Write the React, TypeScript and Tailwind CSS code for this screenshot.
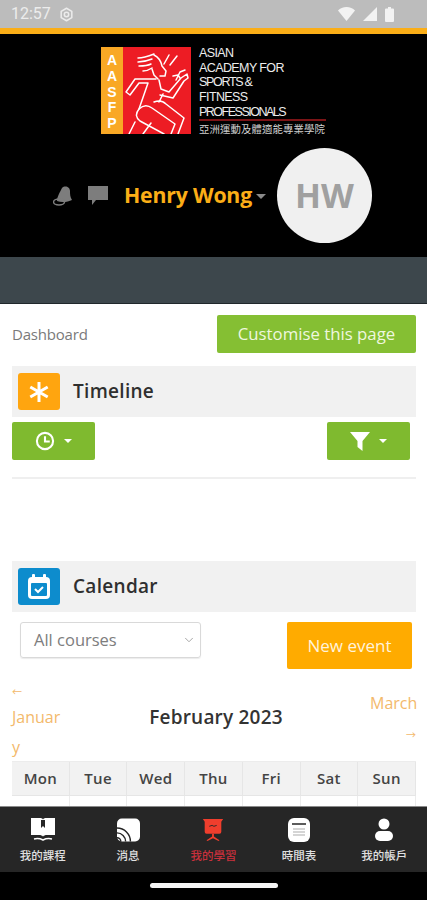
import {ChevronDown} from "lucide-react";

const sans = "font-['Open_Sans','Noto_Sans_CJK_TC',sans-serif]";

const days = ["Mon", "Tue", "Wed", "Thu", "Fri", "Sat", "Sun"];

const StatusBar = () => (
  <div className="h-[28px] shrink-0 bg-[#bcbcbc] flex items-center justify-between pl-[11px] pr-[33px]">
    <div className="flex items-center gap-[8px] text-[#ececec]">
      <span className="font-['Roboto',sans-serif] text-[16px] leading-none">12:57</span>
      <svg width="15" height="15" viewBox="0 0 24 24" fill="none" stroke="currentColor" strokeWidth="2.400">
        <path d="M12 2l8.500 5v10L12 22l-8.500-5V7z" strokeLinejoin="round" />
        <circle cx="12" cy="12" r="3.500" />
      </svg>
    </div>
    <div className="flex items-center gap-[8px] text-[#f2f2f2]">
      <svg width="17" height="14" viewBox="0 0 17 14" fill="currentColor">
        <path d="M0 3.500C2 1.500 5 0 8.500 0S15 1.500 17 3.500L8.500 14z" />
      </svg>
      <svg width="14" height="14" viewBox="0 0 14 14" fill="currentColor">
        <path d="M14 0v14H0z" />
      </svg>
      <svg width="9" height="15" viewBox="0 0 9 15" fill="currentColor">
        <path d="M3 0h3v1.500h2a1 1 0 0 1 1 1V14a1 1 0 0 1-1 1H1a1 1 0 0 1-1-1V2.500a1 1 0 0 1 1-1h2z" />
      </svg>
    </div>
  </div>
);

const Runner = () => (
  <svg width="68" height="87" viewBox="0 0 68 87" fill="none" stroke="#ffffff" strokeWidth="1.500" strokeLinecap="round" strokeLinejoin="round">
    {/* hair */}
    <path d="M15 11c6 0 11-2 16-4M15 15c5 0 9-1 14-3M16 19c4 0 8 0 12-2M20 24c3 0 6-1 9-3" />
    <path d="M41 17l5-9M47 18l7-9" />
    <path d="M31 8c4 2 7 6 8 11l4 5-1 5-5 0M29 22l2 6 4 4" />
    {/* arms */}
    <path d="M33 32H12L3 45l4 3 9-12h9l-9 26" />
    <path d="M36 33l2 9 8 3 12-14 6-4 1 4-4 3-11 17-13-3" />
    <path d="M50 29l5-1 2 3M53 33l4-8 5-2" />
    {/* legs */}
    <path d="M16 62c-4 5-3 9 1 12l24 13M16 62c4-4 9-4 13-1l23 16-4 10" />
    <path d="M31 55c5-2 9-1 12 2l18 14-6 16M36 55l4-8" />
    <path d="M6 87l6-12M20 87l8-11" />
  </svg>
);

const Logo = () => (
  <div className="flex">
    <div className="w-[22px] h-[87px] bg-[#f9a825] flex flex-col items-center justify-between pt-[6px] pb-[4px] text-white text-[14px] leading-none font-bold font-['Liberation_Sans',sans-serif]">
      <span>A</span>
      <span>A</span>
      <span>S</span>
      <span>F</span>
      <span>P</span>
    </div>
    <div className="w-[68px] h-[87px] bg-[#ed1c24]">
      <Runner />
    </div>
    <div className="ml-[8px] w-[127px] -mt-[1px] font-['Liberation_Sans',sans-serif] text-[12.500px] leading-[14.700px] tracking-[-0.600px] text-[#ededed]">
      <div>ASIAN</div>
      <div>ACADEMY FOR</div>
      <div className="tracking-[-1.300px]">SPORTS &amp;</div>
      <div>FITNESS</div>
      <div className="tracking-[-1.500px]">PROFESSIONALS</div>
      <div className="h-[2px] bg-[#7c1416] -mt-[1px]" />
      <div className="font-['Noto_Sans_CJK_TC',sans-serif] text-[10.400px] leading-[15px] tracking-[0.100px] whitespace-nowrap text-[#cfcfcf]">亞洲運動及體適能專業學院</div>
    </div>
  </div>
);

const Header = () => (
  <div className="shrink-0 bg-black border-t-[6px] border-[#fbae17]">
    <div className="h-[223px] flex flex-col items-center pt-[13px]">
      <Logo />
      <div className="mt-[12px] w-full flex items-center pl-[53px]">
        <svg width="20" height="21" viewBox="0 0 20 21" fill="#7d7d7d">
          <path d="M9 3c3-3 8-1 8 3 0 3 0 6 2 9-4 2-10 3-15 1 0-4 3-9 5-13z" />
          <ellipse cx="6" cy="17" rx="5.500" ry="3" fill="none" stroke="#7d7d7d" strokeWidth="1.500" />
        </svg>
        <svg className="ml-[15px]" width="20" height="19" viewBox="0 0 20 19" fill="#7d7d7d">
          <path d="M0 0h20v14H8l-4 5v-5H0z" />
        </svg>
        <span className={`ml-[16px] text-[21.300px] font-bold tracking-[-0.200px] text-[#fbae17] ${sans}`}>Henry Wong</span>
        <span className="ml-[4px] mt-[3px] w-0 h-0 border-x-[5px] border-x-transparent border-t-[5px] border-t-[#8a8a8a]" />
        <div className={`ml-[11px] w-[95px] h-[95px] rounded-full bg-[#f0f0f0] flex items-center justify-center text-[34px] font-bold text-[#a0a0a0] ${sans}`}>HW</div>
      </div>
    </div>
    <div className="h-[47px] bg-[#3d474c] border-b border-[#20272b]" />
  </div>
);

const SectionTitle = ({title, color, icon}: {title: string; color: string; icon: React.ReactNode}) => (
  <div className="h-[51px] bg-[#f1f1f1] flex items-center pl-[6px]">
    <div className={`w-[42px] h-[37px] rounded-[3px] flex items-center justify-center ${color}`}>{icon}</div>
    <span className={`ml-[13px] text-[19px] font-semibold tracking-[0.300px] text-[#2f2f2f] ${sans}`}>{title}</span>
  </div>
);

const GreenButton = ({children}: {children: React.ReactNode}) => (
  <div className="w-[83px] h-[38px] bg-[#7fba2f] rounded-[2px] flex items-center justify-center gap-[9px] text-white">
    {children}
    <span className="w-0 h-0 border-x-[4px] border-x-transparent border-t-[4px] border-t-white" />
  </div>
);

const Content = () => (
  <div className={`flex-1 min-h-0 overflow-hidden bg-white pl-[12px] pr-[11px] pt-[11px] ${sans}`}>
    <div className="flex items-center justify-between">
      <span className="text-[15px] text-[#7a7a7a] tracking-[-0.200px]">Dashboard</span>
      <div className="w-[199px] h-[38px] bg-[#85bf33] rounded-[2px] flex items-center justify-center text-[16.800px] text-[#eef7df]">Customise this page</div>
    </div>
    <div className="mt-[13px]">
      <SectionTitle
        title="Timeline"
        color="bg-[#ffa50f]"
        icon={
          <svg width="20" height="20" viewBox="0 0 20 20" stroke="#ffffff" strokeWidth="3">
            <path d="M10 0v20M1.300 5l17.400 10M18.700 5L1.300 15" />
          </svg>
        }
      />
    </div>
    <div className="mt-[5px] flex justify-between pr-[6px]">
      <GreenButton>
        <svg width="20" height="20" viewBox="0 0 21 21" fill="none" stroke="currentColor" strokeWidth="2.200">
          <circle cx="10.500" cy="10.500" r="8.500" />
          <path d="M10.500 5.500v5.500h5" />
        </svg>
      </GreenButton>
      <GreenButton>
        <svg width="20" height="19" viewBox="0 0 20 19" fill="currentColor">
          <path d="M0 0h20l-7.500 9v10l-5-4V9z" />
        </svg>
      </GreenButton>
    </div>
    <div className="mt-[17px] h-[2px] bg-[#efefef]" />
    <div className="mt-[82px]">
      <SectionTitle
        title="Calendar"
        color="bg-[#0d8ccd]"
        icon={
          <svg width="24" height="27" viewBox="0 0 24 27" fill="none">
            <rect x="1" y="4" width="22" height="22" rx="4" fill="#ffffff" />
            <rect x="5" y="1" width="3" height="6" rx="1" fill="#ffffff" />
            <rect x="16" y="1" width="3" height="6" rx="1" fill="#ffffff" />
            <rect x="4" y="10" width="16" height="13" rx="1" fill="#0d8ccd" />
            <path d="M8 16l3 3 5-5" stroke="#ffffff" strokeWidth="2" />
          </svg>
        }
      />
    </div>
    <div className="mt-[10px] flex items-start pl-[8px] pr-[4px] justify-between">
      <div className="w-[181px] h-[36px] border border-[#d9d9d9] rounded-[3px] flex items-center justify-between pl-[13px] pr-[4px] shadow-[0_1px_1px_#ececec]">
        <span className="text-[16.500px] text-[#7d7d7d]">All courses</span>
        <ChevronDown size={14} strokeWidth={1.500} className="text-[#9a9a9a]" />
      </div>
      <div className="w-[125px] h-[47px] bg-[#ffab00] rounded-[2px] flex items-center justify-center text-[17px] text-[#fff3dc]">New event</div>
    </div>
    <div className="mt-[5px] flex h-[87px] text-[16px] leading-[30px] text-[#f3b96b]">
      <div className="w-[50px]">
        <div className="h-[28px] text-[10px] leading-[36px]">←</div>
        <div>Januar</div>
        <div>y</div>
      </div>
      <div className="flex-1 text-center pt-[28px] text-[19px] font-semibold tracking-[0.200px] text-[#333333]">February 2023</div>
      <div className="w-[46px] pt-[14px] text-right">
        <div>March</div>
        <div className="text-[10px] leading-[34px]">→</div>
      </div>
    </div>
    <div className="grid grid-cols-7 border-t border-[#ececec]">
      {days.map((day) => (
        <div key={day} className="h-[34px] bg-[#f2f2f2] border-r border-b border-[#e6e6e6] flex items-center justify-center text-[15px] font-semibold tracking-[0.300px] text-[#444444]">
          {day}
        </div>
      ))}
      {days.map((day) => (
        <div key={day} className="h-[12px] border-r border-[#ececec]" />
      ))}
    </div>
  </div>
);

const BookIcon = () => (
  <svg width="24" height="24" viewBox="0 0 24 24" fill="#ffffff">
    <path d="M0 0h9c1.500 0 2.500.500 3 1.500C12.500.500 13.500 0 15 0h9v17h-8c-2 0-3 .500-4 1.500-1-1-2-1.500-4-1.500H0z" />
    <path d="M10 2v8l2-2 2 2V2z" fill="#262626" />
    <path d="M3 21c4-1 6-.500 9 1 3-1.500 5-2 9-1" stroke="#ffffff" strokeWidth="1.500" fill="none" />
  </svg>
);

const CastIcon = () => (
  <svg width="23" height="24" viewBox="0 0 24 24" fill="#ffffff">
    <rect x="0" y="0" width="24" height="24" rx="5" />
    <path d="M0 10a14 14 0 0 1 14 14M0 15a9 9 0 0 1 9 9M0 20a4 4 0 0 1 4 4" stroke="#262626" strokeWidth="1.500" fill="none" />
  </svg>
);

const BoardIcon = () => (
  <svg width="22" height="24" viewBox="0 0 22 26" fill="#ef3e2d">
    <path d="M0 1h22l-2 3v11a2 2 0 0 1-2 2H4a2 2 0 0 1-2-2V4z" />
    <path d="M7 9l3-1 2 1 3-1" stroke="#262626" strokeWidth="1" fill="none" />
    <path d="M10 17h2v3l6 4-1 1-6-3-6 3-1-1 6-4z" />
  </svg>
);

const TableIcon = () => (
  <svg width="22" height="24" viewBox="0 0 22 24" fill="#ffffff">
    <rect x="0" y="0" width="22" height="24" rx="6" />
    <path d="M4 6h14" stroke="#262626" strokeWidth="1.500" />
    <path d="M5 11h12M5 14h12M5 17h12" stroke="#c8c8c8" strokeWidth="1.500" />
  </svg>
);

const UserIcon = () => (
  <svg width="20" height="24" viewBox="0 0 20 24" fill="#ffffff">
    <circle cx="10" cy="6" r="5.500" />
    <rect x="1" y="13" width="18" height="10" rx="5" />
  </svg>
);

const tabs = [
  {label: "我的課程", icon: <BookIcon />, active: false},
  {label: "消息", icon: <CastIcon />, active: false},
  {label: "我的學習", icon: <BoardIcon />, active: true},
  {label: "時間表", icon: <TableIcon />, active: false},
  {label: "我的帳戶", icon: <UserIcon />, active: false},
];

const BottomNav = () => (
  <div className="shrink-0">
    <div className="h-[66px] bg-[#262626] border-t border-[#8a8a8a] grid grid-cols-5">
      {tabs.map((tab) => (
        <div key={tab.label} className="flex flex-col items-center pt-[10px]">
          <div className="h-[26px] flex items-center">{tab.icon}</div>
          <span className={`mt-[4px] text-[11.500px] leading-[16px] font-medium font-['Noto_Sans_CJK_TC',sans-serif] ${tab.active ? "text-[#c9303c]" : "text-[#e0e0e0]"}`}>
            {tab.label}
          </span>
        </div>
      ))}
    </div>
    <div className="h-[28px] bg-black flex justify-center pt-[11px]">
      <div className="w-[128px] h-[5px] rounded-full bg-[#f5f5f5]" />
    </div>
  </div>
);

const App = () => {
  return (
    <div className="w-full h-[900px] overflow-hidden flex flex-col">
      <StatusBar />
      <Header />
      <Content />
      <BottomNav />
    </div>
  );
};

export default App;
